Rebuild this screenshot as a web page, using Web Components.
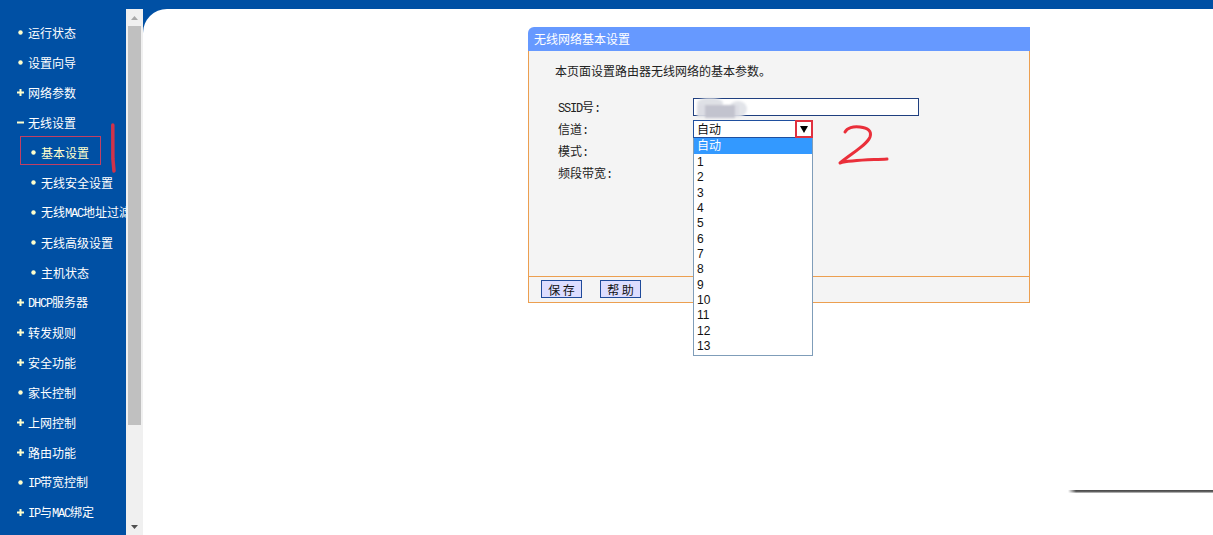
<!DOCTYPE html>
<html lang="zh">
<head>
<meta charset="utf-8">
<title>无线网络基本设置</title>
<style>
    html, body { margin: 0; height: 100%; overflow: hidden; }
    body { font: 12px "Noto Sans CJK SC", sans-serif; }
</style>
</head>
<body>
<router-page>
    <nav-menu slot="menu">
        <nav-item icon="dot">运行状态</nav-item>
        <nav-item icon="dot">设置向导</nav-item>
        <nav-item icon="plus">网络参数</nav-item>
        <nav-item icon="minus">无线设置</nav-item>
        <nav-item icon="dot" sub active>基本设置</nav-item>
        <nav-item icon="dot" sub>无线安全设置</nav-item>
        <nav-item icon="dot" sub>无线<tt-text>MAC</tt-text>地址过滤</nav-item>
        <nav-item icon="dot" sub>无线高级设置</nav-item>
        <nav-item icon="dot" sub>主机状态</nav-item>
        <nav-item icon="plus"><tt-text>DHCP</tt-text>服务器</nav-item>
        <nav-item icon="plus">转发规则</nav-item>
        <nav-item icon="plus">安全功能</nav-item>
        <nav-item icon="dot">家长控制</nav-item>
        <nav-item icon="plus">上网控制</nav-item>
        <nav-item icon="plus">路由功能</nav-item>
        <nav-item icon="dot"><tt-text>IP</tt-text>带宽控制</nav-item>
        <nav-item icon="plus"><tt-text>IP</tt-text>与<tt-text>MAC</tt-text>绑定</nav-item>
    </nav-menu>
    <settings-card slot="content" heading="无线网络基本设置">
        <form-row>
            <span slot="label"><tt-text>SSID</tt-text>号<tt-text>:</tt-text></span>
            <ssid-input></ssid-input>
        </form-row>
        <form-row>
            <span slot="label">信道<tt-text>:</tt-text></span>
            <channel-select></channel-select>
        </form-row>
        <form-row><span slot="label">模式<tt-text>:</tt-text></span></form-row>
        <form-row><span slot="label">频段带宽<tt-text>:</tt-text></span></form-row>
        <router-button slot="footer">保 存</router-button>
        <router-button slot="footer">帮 助</router-button>
    </settings-card>
</router-page>

<script>
class TtText extends HTMLElement {
    constructor() {
        super();
        this.attachShadow({ mode: "open" });
        // no whitespace here, it would show up as a space next to the chinese text
        this.shadowRoot.innerHTML = `<style>:host { display: inline; font-family: "Liberation Mono", monospace; font-size: 12px; letter-spacing: -1.2px; }</style><slot></slot>`;
    }
}

class NavItem extends HTMLElement {
    constructor() {
        super();
        this.attachShadow({ mode: "open" });
        const icons = {
            dot: `<circle cx="3.5" cy="3.5" r="2.2"/>`,
            plus: `<path d="M0 2.5h2.5V0h2v2.5H7v2H4.500V7h-2V4.500H0z"/>`,
            minus: `<path d="M0 2.500h7v2H0z"/>`
        };
        const icon = icons[this.getAttribute("icon")];
        this.shadowRoot.innerHTML = `
        <style>
            :host { display: flex; align-items: center; height: 30px; padding-left: 17px; gap: 4px;
                color: #fff; white-space: nowrap; font-size: 12px; }
            :host([sub]) { padding-left: 30px; }
            :host([active]) { color: #ffffcc; }
            svg { width: 7px; height: 7px; fill: #ffffcc; flex: none; }
        </style>
        <svg viewBox="0 0 7 7">${icon}</svg>
        <span><slot></slot></span>`;
    }
}

class NavMenu extends HTMLElement {
    constructor() {
        super();
        this.attachShadow({ mode: "open" });
        this.shadowRoot.innerHTML = `
        <style>
            :host { display: block; width: 126px; height: 100%; box-sizing: border-box;
                padding-top: 8px; overflow: hidden; position: relative; }
            .box { position: absolute; left: 20px; top: 127px; width: 79px; height: 27px;
                border: 1px solid #c23f63; }
            svg { position: absolute; left: 108px; top: 112px; }
        </style>
        <slot></slot>
        <div class="box"></div>
        <svg width="10" height="54" viewBox="0 0 10 54">
            <path d="M4.800 4L4.900 38L6 50" fill="none" stroke="#d0334a" stroke-width="3.500" stroke-linecap="round"/>
        </svg>`;
    }
}

class ScrollBar extends HTMLElement {
    constructor() {
        super();
        this.attachShadow({ mode: "open" });
        this.shadowRoot.innerHTML = `
        <style>
            :host { display: flex; flex-direction: column; align-items: center; width: 17px;
                height: 100%; background: #f0f0f0; }
            .arrow { height: 17px; display: flex; align-items: center; justify-content: center; flex: none; }
            .thumb { width: 13px; height: 399px; background: #c0c0c0; flex: none; }
            .space { flex: 1; }
            svg { width: 7px; height: 4px; }
        </style>
        <div class="arrow"><svg viewBox="0 0 7 4"><path d="M3.500 0L7 4H0z" fill="#a8a8a8"/></svg></div>
        <div class="thumb"></div>
        <div class="space"></div>
        <div class="arrow"><svg viewBox="0 0 7 4"><path d="M0 0h7L3.500 4z" fill="#505050"/></svg></div>`;
    }
}

class FormRow extends HTMLElement {
    constructor() {
        super();
        this.attachShadow({ mode: "open" });
        this.shadowRoot.innerHTML = `
        <style>
            :host { display: grid; grid-template-columns: 135px 1fr; align-items: center; height: 22px; color: #222; }
            ::slotted([slot="label"]) { padding-bottom: 1px; }
        </style>
        <slot name="label"></slot>
        <div><slot></slot></div>`;
    }
}

class SsidInput extends HTMLElement {
    constructor() {
        super();
        this.attachShadow({ mode: "open" });
        this.shadowRoot.innerHTML = `
        <style>
            :host { display: block; position: relative; width: 226px; height: 18px; box-sizing: border-box;
                border: 1px solid #1f3f7f; background: #fff; }
            svg { position: absolute; left: 0; top: -3px; }
        </style>
        <!-- the blurred out network name -->
        <svg width="60" height="24" viewBox="0 0 60 24">
            <defs><filter id="b"><feGaussianBlur stdDeviation="1"/></filter></defs>
            <g filter="url(#b)">
                <ellipse cx="16" cy="7" rx="13" ry="5" fill="#dfe1e6"/>
                <ellipse cx="44" cy="13" rx="9" ry="8" fill="#e2e4e9"/>
                <rect x="3" y="9" width="42" height="12" fill="#dcdde4"/>
                <rect x="11" y="9" width="30" height="13" fill="#c2c3ce"/>
            </g>
        </svg>`;
    }
}

class ChannelSelect extends HTMLElement {
    constructor() {
        super();
        this.attachShadow({ mode: "open" });
        let options = "";
        for (let i = 1; i <= 13; i++) {
            options += `<div class="option">${i}</div>`;
        }
        this.shadowRoot.innerHTML = `
        <style>
            :host { display: block; position: relative; width: 120px; height: 18px; box-sizing: border-box;
                background: #fff; color: #111; font: 12px "Liberation Sans", "Noto Sans CJK SC", sans-serif; }
            .field { display: flex; align-items: center; height: 18px; box-sizing: border-box; padding: 0 0 2px 3px;
                border: 1px solid #1f4f9f; border-right: 0; }
            .drop { position: absolute; right: 0; top: 0; width: 18px; height: 18px; box-sizing: border-box;
                border: 2px solid #e0303f; background: #fff; display: flex; align-items: center; justify-content: center; }
            .drop svg { width: 8px; height: 8px; }
            .list { position: absolute; left: 0; top: 18px; width: 120px; height: 218px; box-sizing: border-box;
                border: 1px solid #7f9db9; border-top: 0; background: #fff; }
            .option { height: 15.340px; line-height: 17px; padding-left: 3px; }
            .selected { height: 16px; line-height: 17px; background: #3399ff; color: #fff; }
        </style>
        <div class="field">自动</div>
        <div class="drop"><svg viewBox="0 0 8 8"><path d="M0 1h8L4 8z" fill="#000"/></svg></div>
        <div class="list">
            <div class="option selected">自动</div>
            ${options}
        </div>`;
    }
}

class RouterButton extends HTMLElement {
    constructor() {
        super();
        this.attachShadow({ mode: "open" });
        this.shadowRoot.innerHTML = `
        <style>
            :host { display: flex; align-items: center; justify-content: center; width: 41px; height: 18px;
                box-sizing: border-box; border: 1px solid #1f4a9a; background: #ddddff; color: #111;
                font-size: 12px; white-space: pre; }
        </style>
        <slot></slot>`;
    }
}

class SettingsCard extends HTMLElement {
    constructor() {
        super();
        this.attachShadow({ mode: "open" });
        this.shadowRoot.innerHTML = `
        <style>
            :host { display: flex; flex-direction: column; width: 502px; height: 276px; font-size: 12px; color: #222; }
            .title { height: 24px; box-sizing: border-box; flex: none; display: flex; align-items: center; padding: 0 0 2px 6px;
                background: #6699ff; color: #fff; border-radius: 6px 0 0 0; }
            .body { flex: 1; background: #f4f4f4; border: 1px solid #ec9f50; border-top: 0; border-bottom: 0;
                padding: 12px 0 0 26px; }
            .intro { height: 18px; line-height: 16px; margin-bottom: 15px; }
            .rows { padding-left: 3px; }
            .foot { height: 27px; flex: none; box-sizing: border-box; background: #f4f4f4; border: 1px solid #ec9f50;
                display: flex; gap: 18px; padding: 3px 0 0 12px; }
        </style>
        <div class="title">${this.getAttribute("heading")}</div>
        <div class="body">
            <div class="intro">本页面设置路由器无线网络的基本参数。</div>
            <div class="rows"><slot></slot></div>
        </div>
        <div class="foot"><slot name="footer"></slot></div>`;
    }
}

class RouterPage extends HTMLElement {
    constructor() {
        super();
        this.attachShadow({ mode: "open" });
        this.shadowRoot.innerHTML = `
        <style>
            :host { display: grid; grid-template-columns: 126px 17px 1fr; grid-template-rows: 9px 526px;
                width: 1213px; height: 535px; background: #0050a4; overflow: hidden; position: relative; }
            .top { grid-column: 1 / 4; }
            .menu { height: 526px; overflow: hidden; }
            .main { background: #fff; border-top-left-radius: 24px 24px; padding: 18px 0 0 385px; position: relative; z-index: 0; }
            .two { position: absolute; left: 830px; top: 118px; pointer-events: none; }
            .rule { position: absolute; left: 1068px; top: 490px; width: 145px; height: 3px;
                background: linear-gradient(#444, #666 60%, #ddd);
                -webkit-mask-image: linear-gradient(90deg, transparent, #000 8px); mask-image: linear-gradient(90deg, transparent, #000 8px); }
        </style>
        <div class="top"></div>
        <div class="menu"><slot name="menu"></slot></div>
        <scroll-bar></scroll-bar>
        <div class="main"><slot name="content"></slot></div>
        <svg class="two" width="64" height="52" viewBox="830 118 64 52">
            <path d="M845 132C847 128 853 126 860 127C868 128 872 131 870 137C867 145 852 153 840 163C850 160 870 160 887 159" fill="none" stroke="#ea2f3a" stroke-width="3" stroke-linecap="round" stroke-linejoin="round"/>
        </svg>
        <div class="rule"></div>`;
    }
}

window.customElements.define("tt-text", TtText);
window.customElements.define("nav-item", NavItem);
window.customElements.define("nav-menu", NavMenu);
window.customElements.define("scroll-bar", ScrollBar);
window.customElements.define("form-row", FormRow);
window.customElements.define("ssid-input", SsidInput);
window.customElements.define("channel-select", ChannelSelect);
window.customElements.define("router-button", RouterButton);
window.customElements.define("settings-card", SettingsCard);
window.customElements.define("router-page", RouterPage);
</script>
</body>
</html>
